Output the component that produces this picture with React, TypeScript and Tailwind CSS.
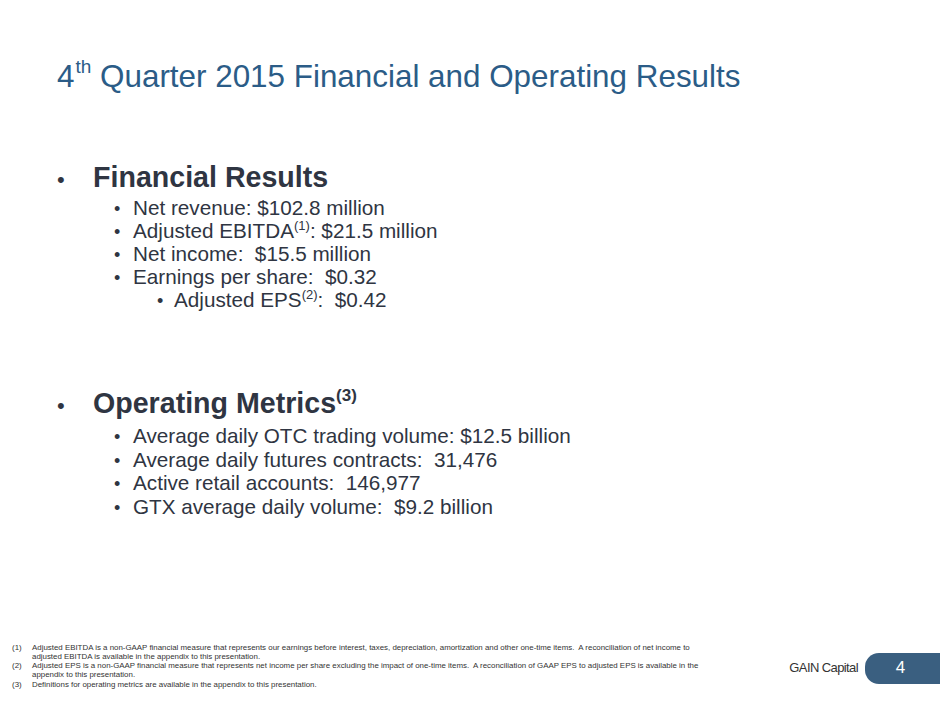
const FINANCIAL = [
  { text: 'Net revenue: $102.8 million' },
  { text: 'Adjusted EBITDA', sup: '(1)', rest: ': $21.5 million' },
  { text: 'Net income:  $15.5 million' },
  { text: 'Earnings per share:  $0.32' },
];

const OPERATING = [
  'Average daily OTC trading volume: $12.5 billion',
  'Average daily futures contracts:  31,476',
  'Active retail accounts:  146,977',
  'GTX average daily volume:  $9.2 billion',
];

const NOTES = [
  {
    n: '(1)',
    text: 'Adjusted EBITDA is a non-GAAP financial measure that represents our earnings before interest, taxes, depreciation, amortization and other one-time items.  A reconciliation of net income to adjusted EBITDA is available in the appendix to this presentation.',
  },
  {
    n: '(2)',
    text: 'Adjusted EPS is a non-GAAP financial measure that represents net income per share excluding the impact of one-time items.  A reconciliation of GAAP EPS to adjusted EPS is available in the appendix to this presentation.',
  },
  {
    n: '(3)',
    text: 'Definitions for operating metrics are available in the appendix to this presentation.',
  },
];

function SubItem({ children }: { children: React.ReactNode }) {
  return (
    <div className="flex items-baseline">
      <span className="w-[20px] shrink-0 text-[18px] leading-none pl-[1px]">•</span>
      <span className="whitespace-pre">{children}</span>
    </div>
  );
}

export default function App() {
  return (
    <div
      className="relative w-[940px] h-[705px] bg-white overflow-hidden flex flex-col"
      style={{ fontFamily: '"Liberation Sans", Arial, sans-serif' }}
    >
      {/* Title */}
      <h1 className="pl-[57px] pt-[59px] text-[31.4px] leading-[36px] text-[#2b5c87] whitespace-nowrap">
        4<sup className="text-[19px] top-[-0.75em] ml-[1px]">th</sup> Quarter 2015 Financial and Operating Results
      </h1>

      {/* Body */}
      <div className="pl-[57px] pt-[67px] text-[#2f3542]">
        <div className="flex items-baseline">
          <span className="w-[36px] shrink-0 text-[22px] leading-none">•</span>
          <span className="text-[28.6px] leading-[30px] font-bold">Financial Results</span>
        </div>
        <div className="pl-[56px] pt-[4px] text-[20.7px] leading-[23px]">
          {FINANCIAL.map((item) => (
            <SubItem key={item.text}>
              {item.text}
              {item.sup && <sup className="text-[13px] top-[-0.6em]">{item.sup}</sup>}
              {item.rest}
            </SubItem>
          ))}
          <div className="pl-[44px]">
            <div className="flex items-baseline">
              <span className="w-[17px] shrink-0 text-[18px] leading-none">•</span>
              <span className="whitespace-pre">
                Adjusted EPS<sup className="text-[13px] top-[-0.6em]">(2)</sup>:  $0.42
              </span>
            </div>
          </div>
        </div>

        <div className="flex items-baseline pt-[77px]">
          <span className="w-[36px] shrink-0 text-[22px] leading-none">•</span>
          <span className="text-[28.6px] leading-[30px] font-bold">
            Operating Metrics<sup className="text-[17px] top-[-0.7em]">(3)</sup>
          </span>
        </div>
        <div className="pl-[56px] pt-[6px] text-[20.7px] leading-[23.6px]">
          {OPERATING.map((t) => (
            <SubItem key={t}>{t}</SubItem>
          ))}
        </div>
      </div>

      {/* Footer */}
      <div className="mt-auto flex items-end pb-[16px]">
        <div className="pl-[12px] w-[702px] text-[7.9px] leading-[9.3px] text-[#333]">
          {NOTES.map((note) => (
            <div key={note.n} className="flex">
              <span className="w-[20px] shrink-0">{note.n}</span>
              <span className="whitespace-pre-wrap">{note.text}</span>
            </div>
          ))}
        </div>
        <div className="ml-auto flex items-center self-start mt-[10px]">
          <span className="text-[13px] text-[#333] tracking-[-0.6px] mr-[7px]">GAIN Capital</span>
          <div className="w-[75px] h-[31px] bg-[#3a5f80] rounded-l-[14px] flex items-center justify-center text-white text-[17px] pr-[4px]">
            4
          </div>
        </div>
      </div>
    </div>
  );
}
